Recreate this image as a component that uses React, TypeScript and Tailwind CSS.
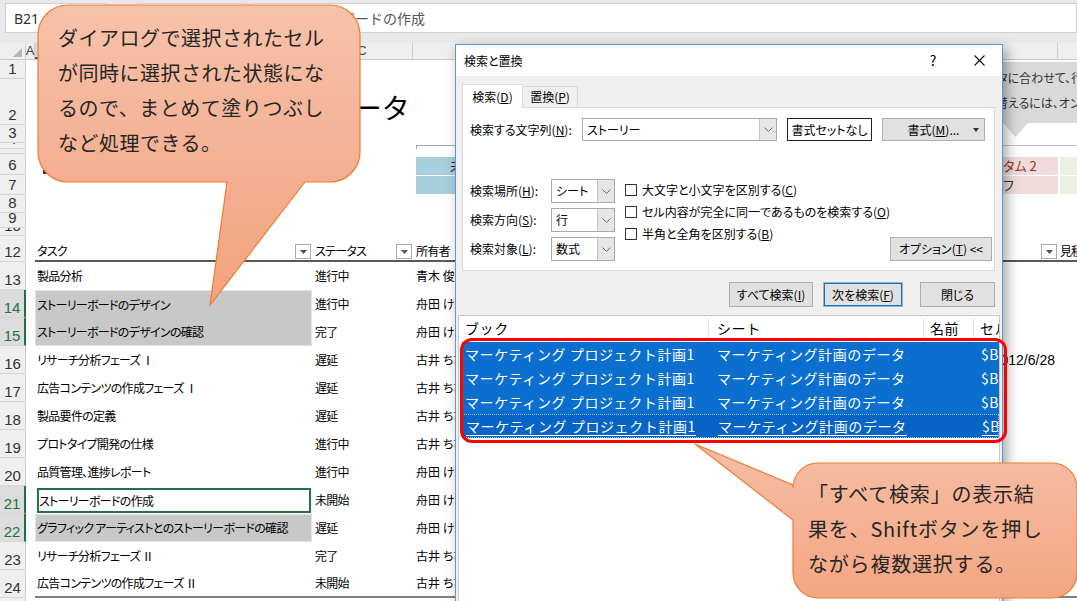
import type { ReactNode } from "react";

const jp = "font-['Noto_Sans_CJK_JP',sans-serif]";

type RowProps = {
  n: string;
  h: string;
  sel?: boolean;
  b?: ReactNode;
  c?: ReactNode;
  d?: ReactNode;
  e?: ReactNode;
  f?: ReactNode;
  bCls?: string;
  cCls?: string;
  dCls?: string;
  eCls?: string;
  fCls?: string;
};

function Row({ n, h, sel, b, c, d, e, f, bCls = "", cCls = "", dCls = "", eCls = "", fCls = "" }: RowProps) {
  return (
    <div className={`flex shrink-0 ${h}`}>
      <div
        className={`w-[26px] shrink-0 flex items-end justify-center overflow-hidden border-b border-[#d5d5d5] text-[15px] leading-[15px] pb-[2px] tracking-normal font-['Liberation_Sans',sans-serif] ${
          sel ? "bg-[#dcdcdc] text-[#217346] border-r-2 border-r-[#217346]" : "bg-[#efefef] text-[#333] border-r border-r-[#cfcfcf]"
        }`}
      >
        {n}
      </div>
      <div className="w-[9px] shrink-0" />
      <div className={`w-[277px] shrink-0 flex items-center ${bCls}`}>{b}</div>
      <div className={`w-[101px] shrink-0 flex items-center pl-[3px] ${cCls}`}>{c}</div>
      <div className={`w-[590px] shrink-0 flex items-center pl-[3px] whitespace-nowrap ${dCls}`}>{d}</div>
      <div className={`w-[55px] shrink-0 flex items-center ${eCls}`}>{e}</div>
      <div className={`flex-1 flex items-center overflow-hidden whitespace-nowrap ${fCls}`}>{f}</div>
    </div>
  );
}

function FilterBtn() {
  return (
    <div className="w-[16px] h-[15px] shrink-0 border border-[#ababab] bg-white flex items-center justify-center">
      <svg width="7" height="4" viewBox="0 0 7 4">
        <path d="M0 0 H7 L3.5 4 Z" fill="#555" />
      </svg>
    </div>
  );
}

const tasks = [
  { n: "13", task: "製品分析", status: "進行中", owner: "青木 俊介", sel: "" },
  { n: "14", task: "ストーリーボードのデザイン", status: "進行中", owner: "舟田 けい", sel: "top" },
  { n: "15", task: "ストーリーボードのデザインの確認", status: "完了", owner: "舟田 けい", sel: "bottom" },
  { n: "16", task: "リサーチ分析フェーズ Ⅰ", status: "遅延", owner: "古井 ちひろ", sel: "", date: "2012/6/28" },
  { n: "17", task: "広告コンテンツの作成フェーズ Ⅰ", status: "遅延", owner: "古井 ちひろ", sel: "" },
  { n: "18", task: "製品要件の定義", status: "遅延", owner: "古井 ちひろ", sel: "" },
  { n: "19", task: "プロトタイプ開発の仕様", status: "進行中", owner: "古井 ちひろ", sel: "" },
  { n: "20", task: "品質管理、進捗レポート", status: "進行中", owner: "舟田 けい", sel: "" },
  { n: "21", task: "ストーリーボードの作成", status: "未開始", owner: "舟田 けい", sel: "active" },
  { n: "22", task: "グラフィック アーティストとのストーリーボードの確認", status: "遅延", owner: "舟田 けい", sel: "single" },
  { n: "23", task: "リサーチ分析フェーズ Ⅱ", status: "完了", owner: "古井 ちひろ", sel: "" },
  { n: "24", task: "広告コンテンツの作成フェーズ Ⅱ", status: "未開始", owner: "古井 ちひろ", sel: "" },
];

function taskCell(sel: string) {
  if (sel === "top") return "bg-[#c8c8c8] border-l border-r border-t border-[#e2e2e2] pl-[1px]";
  if (sel === "bottom") return "bg-[#c8c8c8] border-l border-r border-b border-[#e2e2e2] pl-[1px]";
  if (sel === "single") return "bg-[#c8c8c8] border border-[#e2e2e2] pl-[1px]";
  if (sel === "active") return "items-stretch pt-[2px] pb-[1px] pl-[2px] pr-[1px]";
  return "pl-[2px]";
}

function Sheet() {
  return (
    <div className={`flex flex-col ${jp} [font-feature-settings:'palt'] text-[12px] tracking-[-0.7px] text-black`}>
      {/* formula bar */}
      <div className="h-[43px] shrink-0 bg-[#e9e9e9] flex items-start pt-[3px] tracking-normal">
        <div className="ml-[5px] w-[102px] h-[30px] bg-white border border-[#d2d2d2] flex items-center pl-[8px] text-[14px] text-[#333] font-['Noto_Sans',sans-serif]">
          B21
        </div>
        <div className="ml-[30px] w-[110px] h-[30px] bg-white border border-[#d2d2d2]" />
        <div className="ml-[3px] flex-1 h-[30px] bg-white border border-[#d2d2d2] flex items-center pl-[20px] text-[14px] text-[#555] [font-feature-settings:normal]">
          ストーリーボードの作成
        </div>
      </div>

      {/* column headers */}
      <div className="h-[17px] shrink-0 flex bg-[#efefef] border-b border-[#c8c8c8] text-[13px] text-[#444] tracking-normal font-['Liberation_Sans',sans-serif] leading-[16px]">
        <div className="w-[26px] shrink-0 border-r border-[#cfcfcf] flex items-end justify-end pr-[3px] pb-[2px]">
          <svg width="9" height="9" viewBox="0 0 9 9">
            <path d="M9 0 V9 H0 Z" fill="#b5b5b5" />
          </svg>
        </div>
        <div className="w-[9px] shrink-0 border-r border-[#cfcfcf] flex justify-center overflow-visible">A</div>
        <div className="w-[277px] shrink-0 bg-[#d8d8d8] border-b-2 border-[#217346] border-r border-r-[#cfcfcf] flex justify-center text-[#217346]">B</div>
        <div className="w-[101px] shrink-0 border-r border-[#cfcfcf] flex justify-center">C</div>
        <div className="w-[645px] shrink-0 border-r border-[#cfcfcf] flex justify-center">D</div>
        <div className="flex-1" />
      </div>

      <Row n="1" h="h-[19px]" />
      <Row
        n="2"
        h="h-[46px]"
        bCls="items-end pl-[13px] pb-[4px] overflow-visible"
        b={<span className="text-[28px] leading-none tracking-normal whitespace-nowrap [font-feature-settings:normal]">マーケティング計画のデータ</span>}
      />
      <Row n="3" h="h-[18px]" />
      <Row
        n="4"
        h="h-[6px]"
        dCls="items-end pl-0"
        d={<div className="w-full h-[4px] border-t border-l border-[#a6a6a6]" />}
        eCls="items-end"
        e={<div className="w-full h-[4px] border-t border-[#c4c4c4]" />}
        fCls="items-end"
        f={<div className="w-full h-[4px] border-t border-[#c4c4c4]" />}
      />
      <Row n="5" h="h-[5px]" />
      <Row
        n="6"
        h="h-[21px]"
        bCls="items-start pt-[9px] pl-[8px]"
        b={<div className="w-[30px] h-[11px] bg-[#6f1a1c]" />}
        dCls="items-start pt-[3px] pl-0 justify-between"
        d={
          <>
            <div className="w-[120px] h-[18px] bg-[#a8cfdd] pl-[34px] text-[13px] leading-[18px] text-[#222]">未開始</div>
            <div className="w-[100px] h-[18px] bg-[#f2dcdb]" />
          </>
        }
        eCls="items-start pt-[3px]"
        e={<div className="w-full h-[18px] bg-[#f2dcdb] text-[#943634] text-[13px] tracking-normal leading-[18px] whitespace-nowrap">タム 2</div>}
        fCls="items-start pt-[3px] pl-[2px]"
        f={<div className="w-full h-[18px] bg-[#ebf1de]" />}
      />
      <Row
        n="7"
        h="h-[20px]"
        dCls="items-start pt-[1px] pl-0 justify-between"
        d={
          <>
            <div className="w-[120px] h-[18px] bg-[#a8cfdd]" />
            <div className="w-[100px] h-[18px] bg-[#f2dcdb]" />
          </>
        }
        eCls="items-start pt-[1px]"
        e={<div className="w-full h-[18px] bg-[#f2dcdb] text-[#333] text-[13px] leading-[18px]">フ</div>}
        fCls="items-start pt-[1px] pl-[2px]"
        f={<div className="w-full h-[18px] bg-[#ebf1de]" />}
      />
      <Row n="8" h="h-[18px]" />
      <Row n="9" h="h-[15px]" />
      <Row n="10" h="h-[8px]" />
      <Row
        n="12"
        h="h-[26px]"
        bCls="items-end justify-between pl-[2px] pr-[1px] pb-[1px] border-b-2 border-[#595959]"
        b={
          <>
            <span className="leading-[16px]">タスク</span>
            <FilterBtn />
          </>
        }
        cCls="items-end justify-between pr-[1px] pb-[1px] border-b-2 border-[#595959]"
        c={
          <>
            <span className="leading-[16px]">ステータス</span>
            <FilterBtn />
          </>
        }
        dCls="items-end pb-[1px] border-b-2 border-[#595959]"
        d={<span className="leading-[16px]">所有者</span>}
        eCls="items-end justify-end pr-[1px] pb-[1px] border-b-2 border-[#595959]"
        e={<FilterBtn />}
        fCls="items-end pl-[2px] pb-[1px] border-b-2 border-[#595959]"
        f={<span className="leading-[16px]">見積もり</span>}
      />
      {tasks.map((t) => {
        const last = t.n === "24";
        return (
          <Row
            key={t.n}
            n={t.n}
            h="h-[28px]"
            sel={t.sel !== ""}
            bCls={`${taskCell(t.sel)} whitespace-nowrap overflow-hidden ${last ? "border-b-2 border-[#7f7f7f]" : ""}`}
            b={
              t.sel === "active" ? (
                <div className="flex-1 border-2 border-[#217346] flex items-center bg-white">{t.task}</div>
              ) : (
                t.task
              )
            }
            cCls={last ? "border-b-2 border-[#7f7f7f]" : ""}
            c={t.status}
            dCls={`tracking-normal ${last ? "border-b-2 border-[#7f7f7f]" : ""}`}
            d={t.owner}
            eCls={`justify-end pr-[3px] whitespace-nowrap ${last ? "border-b-2 border-[#7f7f7f]" : ""}`}
            e={t.date ? <span className="text-[14px] tracking-normal font-['Liberation_Sans',sans-serif]">{t.date}</span> : null}
            fCls={last ? "border-b-2 border-[#7f7f7f]" : ""}
          />
        );
      })}
      <Row n="25" h="h-[28px]" />
    </div>
  );
}

function InputMessage() {
  return (
    <>
      <div
        className={`absolute left-[974px] top-[62px] w-[120px] h-[61px] bg-[#d9d9d9] text-[12px] text-[#333] leading-[25px] pt-[3px] whitespace-nowrap ${jp} [font-feature-settings:'palt']`}
      >
        <div>データに合わせて、行の</div>
        <div>切り替えるには、オン</div>
      </div>
      <svg className="absolute left-[1003px] top-[123px]" width="25" height="14" viewBox="0 0 25 14">
        <path d="M0 0 H25 L12.5 14 Z" fill="#d9d9d9" />
      </svg>
    </>
  );
}

function Chevron() {
  return (
    <svg width="9" height="5" viewBox="0 0 9 5">
      <path d="M0.5 0.5 L4.5 4.5 L8.5 0.5" fill="none" stroke="#6a6a6a" strokeWidth="1" />
    </svg>
  );
}

function Combo({ value, w }: { value: string; w: string }) {
  return (
    <div className={`${w} h-full flex border border-[#a9a9a9] bg-white shrink-0`}>
      <div className="flex-1 flex items-center pl-[4px] whitespace-nowrap overflow-hidden">{value}</div>
      <div className="w-[17px] flex items-center justify-center bg-[#e6e6e6] border-l border-[#c4c4c4]">
        <Chevron />
      </div>
    </div>
  );
}

function Check({ children }: { children: ReactNode }) {
  return (
    <div className="h-[22px] flex items-center">
      <div className="w-[12px] h-[12px] border border-[#333] bg-white shrink-0" />
      <span className="ml-[5px] whitespace-nowrap">{children}</span>
    </div>
  );
}

function Btn({ w, children, cls = "" }: { w: string; children: ReactNode; cls?: string }) {
  return (
    <div className={`${w} h-full flex items-center justify-center bg-[#e1e1e1] border border-[#adadad] whitespace-nowrap shrink-0 ${cls}`}>
      {children}
    </div>
  );
}

function ResultRow({ focus }: { focus?: boolean }) {
  return (
    <div
      className={`h-[24px] flex items-center text-white whitespace-nowrap ${
        focus ? "bg-[#0564c6] border border-dotted border-[#9cc3ec]" : "bg-[#0b6fd0]"
      }`}
    >
      <div className="w-[246px] shrink-0 pl-[3px] overflow-hidden">
        <span className={focus ? "underline underline-offset-[3px]" : ""}>マーケティング プロジェクト計画1</span>
      </div>
      <div className="w-[215px] shrink-0 pl-[9px] overflow-hidden">
        <span className={focus ? "underline underline-offset-[3px]" : ""}>マーケティング計画のデータ</span>
      </div>
      <div className="w-[50px] shrink-0" />
      <div className="flex-1 pl-[8px] overflow-hidden">
        <span className={focus ? "underline underline-offset-[3px]" : ""}>$B$14</span>
      </div>
    </div>
  );
}

function Dialog() {
  return (
    <div
      className={`absolute left-[455px] top-[44px] w-[548px] h-[570px] bg-[#f0f0f0] border border-[#5b97d6] shadow-[4px_4px_12px_rgba(0,0,0,0.35)] flex flex-col text-[12px] text-black ${jp} [font-feature-settings:'palt']`}
    >
      <div className="h-[31px] shrink-0 bg-white flex items-center pl-[8px]">
        <span>検索と置換</span>
        <span className="ml-auto w-[46px] text-center text-[14px]">?</span>
        <span className="w-[46px] flex justify-center">
          <svg width="11" height="11" viewBox="0 0 11 11">
            <path d="M0.5 0.5 L10.5 10.5 M10.5 0.5 L0.5 10.5" stroke="#111" strokeWidth="1.1" />
          </svg>
        </span>
      </div>

      <div className="mt-[8px] ml-[6px] flex items-end shrink-0">
        <div className="w-[61px] h-[24px] bg-white border border-b-0 border-[#d9d9d9] flex items-center justify-center relative z-10 mb-[-1px]">
          <span>
            検索(<u>D</u>)
          </span>
        </div>
        <div className="w-[55px] h-[21px] bg-[#f0f0f0] border border-l-0 border-b-0 border-[#d9d9d9] flex items-center justify-center">
          <span>
            置換(<u>P</u>)
          </span>
        </div>
      </div>

      <div className="ml-[6px] w-[533px] h-[164px] shrink-0 bg-white border border-[#d9d9d9] flex flex-col">
        <div className="mt-[10px] h-[23px] flex items-center">
          <div className="w-[119px] pl-[7px] whitespace-nowrap">
            検索する文字列(<u>N</u>):
          </div>
          <Combo w="w-[195px]" value="ストーリー" />
          <div className="ml-[10px] w-[85px] h-full border border-[#222] bg-white flex items-center justify-center whitespace-nowrap">
            書式セットなし
          </div>
          <div className="ml-[10px] w-[103px] h-full bg-[#e1e1e1] border border-[#adadad] flex items-center relative">
            <span className="w-full text-center">
              書式(<u>M</u>)...
            </span>
            <svg className="absolute right-[5px] top-[9px]" width="6" height="4" viewBox="0 0 6 4">
              <path d="M0 0 H6 L3 4 Z" fill="#333" />
            </svg>
          </div>
        </div>

        <div className="mt-[38px] flex">
          <div className="flex flex-col gap-[5px]">
            <div className="h-[24px] flex items-center">
              <div className="w-[88px] pl-[7px] whitespace-nowrap">
                検索場所(<u>H</u>):
              </div>
              <Combo w="w-[64px]" value="シート" />
            </div>
            <div className="h-[24px] flex items-center">
              <div className="w-[88px] pl-[7px] whitespace-nowrap">
                検索方向(<u>S</u>):
              </div>
              <Combo w="w-[64px]" value="行" />
            </div>
            <div className="h-[24px] flex items-center">
              <div className="w-[88px] pl-[7px] whitespace-nowrap">
                検索対象(<u>L</u>):
              </div>
              <Combo w="w-[64px]" value="数式" />
            </div>
          </div>
          <div className="ml-[10px] flex-1 flex">
            <div className="flex-1 flex flex-col">
              <Check>
                大文字と小文字を区別する(<u>C</u>)
              </Check>
              <Check>
                セル内容が完全に同一であるものを検索する(<u>O</u>)
              </Check>
              <Check>
                半角と全角を区別する(<u>B</u>)
              </Check>
            </div>
            <div className="self-end mr-[7px] h-[24px]">
              <Btn w="w-[102px]">
                オプション(<u>T</u>) &lt;&lt;
              </Btn>
            </div>
          </div>
        </div>
      </div>

      <div className="mt-[11px] h-[25px] shrink-0 flex justify-end pr-[7px]">
        <Btn w="w-[84px]">
          すべて検索(<u>I</u>)
        </Btn>
        <Btn w="w-[80px]" cls="ml-[10px] border-[#0078d7] shadow-[inset_0_0_0_1px_#0078d7]">
          次を検索(<u>F</u>)
        </Btn>
        <Btn w="w-[75px]" cls="ml-[17px]">
          閉じる
        </Btn>
      </div>

      <div className="mt-[8px] mx-[2px] flex-1 bg-white border border-[#c8c8c8] flex flex-col text-[14px] tracking-[0.6px] [font-feature-settings:normal]">
        <div className="h-[24px] shrink-0 flex items-center whitespace-nowrap">
          <div className="w-[250px] shrink-0 pl-[6px] border-r border-[#e3e3e3]">ブック</div>
          <div className="w-[215px] shrink-0 pl-[8px] border-r border-[#e3e3e3]">シート</div>
          <div className="w-[50px] shrink-0 pl-[6px] border-r border-[#e3e3e3]">名前</div>
          <div className="flex-1 pl-[6px] overflow-hidden">セル</div>
        </div>
        <div className="mt-[2px] ml-[3px] mr-[0px] flex flex-col">
          <ResultRow />
          <ResultRow />
          <ResultRow />
          <ResultRow focus />
        </div>
      </div>
    </div>
  );
}

function Callouts() {
  return (
    <>
      <svg className="absolute left-0 top-0" width="1077" height="601" viewBox="0 0 1077 601">
        <defs>
          <linearGradient id="g1" gradientUnits="userSpaceOnUse" x1="0" y1="5" x2="0" y2="305">
            <stop offset="0" stopColor="#f7c2aa" />
            <stop offset="0.6" stopColor="#f3ae90" />
            <stop offset="1" stopColor="#f4a37c" />
          </linearGradient>
          <linearGradient id="g2" gradientUnits="userSpaceOnUse" x1="0" y1="463" x2="0" y2="598">
            <stop offset="0" stopColor="#f6bba1" />
            <stop offset="1" stopColor="#f3a682" />
          </linearGradient>
        </defs>
        <path
          d="M68 5 H330 A30 30 0 0 1 360 35 V152 A30 30 0 0 1 330 182 H305 L210 305 L227 182 H68 A30 30 0 0 1 38 152 V35 A30 30 0 0 1 68 5 Z"
          fill="url(#g1)"
          stroke="#ed7d31"
          strokeWidth="1.2"
        />
        <path
          d="M818 463 H1052 A25 25 0 0 1 1077 488 V573 A25 25 0 0 1 1052 598 H818 A25 25 0 0 1 793 573 V520 L695 444 L793 485 V488 A25 25 0 0 1 818 463 Z"
          fill="url(#g2)"
          stroke="#ed7d31"
          strokeWidth="1.2"
        />
      </svg>
      <div className={`absolute left-[58px] top-[20px] text-[20px] leading-[35px] tracking-[0.5px] text-[#262626] whitespace-nowrap ${jp}`}>
        <div>ダイアログで選択されたセル</div>
        <div>が同時に選択された状態にな</div>
        <div>るので、まとめて塗りつぶし</div>
        <div>など処理できる。</div>
      </div>
      <div className={`absolute left-[808px] top-[476px] text-[20px] leading-[35px] tracking-[0.8px] text-[#262626] whitespace-nowrap ${jp}`}>
        <div>「すべて検索」の表示結</div>
        <div>果を、Shiftボタンを押し</div>
        <div>ながら複数選択する。</div>
      </div>
    </>
  );
}

export default function App() {
  return (
    <div className="relative w-[1077px] h-[601px] overflow-hidden bg-white">
      <Sheet />
      <InputMessage />
      <Dialog />
      <div className="absolute left-[460px] top-[338px] w-[547px] h-[105px] border-[3px] border-[#ff0000] rounded-[12px]" />
      <Callouts />
    </div>
  );
}
